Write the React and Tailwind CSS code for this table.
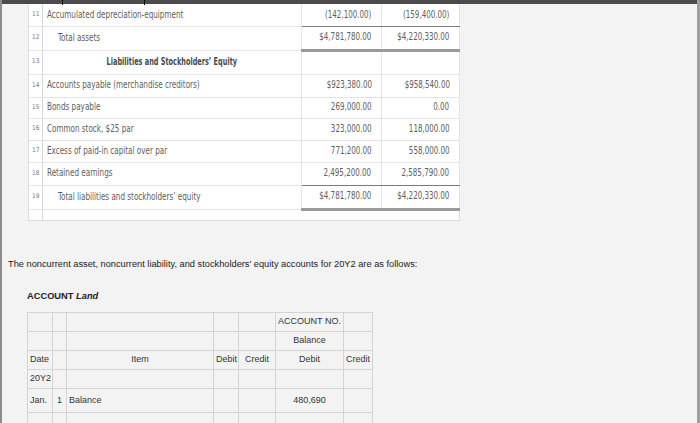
const rows = [
  { n: 11, label: "Accumulated depreciation-equipment", a: "(142,100.00)", b: "(159,400.00)", line: "single" },
  { n: 12, label: "Total assets", indent: true, a: "$4,781,780.00", b: "$4,220,330.00", line: "double" },
  { n: 13, label: "Liabilities and Stockholders’ Equity", head: true, a: "", b: "" },
  { n: 14, label: "Accounts payable (merchandise creditors)", a: "$923,380.00", b: "$958,540.00" },
  { n: 15, label: "Bonds payable", a: "269,000.00", b: "0.00" },
  { n: 16, label: "Common stock, $25 par", a: "323,000.00", b: "118,000.00" },
  { n: 17, label: "Excess of paid-in capital over par", a: "771,200.00", b: "558,000.00" },
  { n: 18, label: "Retained earnings", a: "2,495,200.00", b: "2,585,790.00", line: "single" },
  { n: 19, label: "Total liabilities and stockholders’ equity", indent: true, a: "$4,781,780.00", b: "$4,220,330.00", line: "double" },
];

const heights = ["h-[22px]", "h-[24px]", "h-[24px]", "h-[23px]", "h-[21px]", "h-[22px]", "h-[22px]", "h-[23px]", "h-[24px]"];

function AmountCell({ value, line }) {
  const bottom =
    line === "single"
      ? "border-b border-b-[#7a7a7a]"
      : line === "double"
      ? "border-b-[3px] border-b-[#9a9a9a]"
      : "border-b border-b-[#e4e4e4]";
  return (
    <td className={`border-r border-r-[#e4e4e4] ${bottom} pr-[9px] align-middle whitespace-nowrap`}>
      <div className="flex justify-end">
        <span className="inline-block origin-right scale-x-[0.72]">{value}</span>
      </div>
    </td>
  );
}

function Statement() {
  return (
    <div className="ml-[26px] w-[432px] bg-white border border-[#dcdcdc] border-t-0">
      <table className="w-[430px] table-fixed border-collapse text-[11px] text-[#606060] font-['DejaVu_Sans_Condensed','DejaVu_Sans',sans-serif]">
        <colgroup>
          <col className="w-[13px]" />
          <col className="w-[259px]" />
          <col className="w-[80px]" />
          <col className="w-[78px]" />
        </colgroup>
        <tbody>
          {rows.map((r, i) => (
            <tr key={r.n} className={heights[i]}>
              <td className="border-r border-r-[#d6d6d6] border-b border-b-[#e4e4e4] pl-[3px] text-[6.5px] text-[#777] align-middle">
                {r.n}
              </td>
              <td
                className={`border-r border-r-[#e4e4e4] border-b border-b-[#e4e4e4] align-middle whitespace-nowrap ${
                  r.head ? "text-center font-bold text-[#4a4a4a]" : r.indent ? "pl-[15px]" : "pl-[4px]"
                }`}
              >
                <span
                  className={`inline-block ${r.head ? "origin-center scale-x-[0.66]" : "origin-left scale-x-[0.73]"}`}
                >
                  {r.label}
                </span>
              </td>
              <AmountCell value={r.a} line={r.line} />
              <AmountCell value={r.b} line={r.line} />
            </tr>
          ))}
          <tr className="h-[11px]">
            <td className="border-r border-r-[#d6d6d6]"></td>
            <td></td>
            <td></td>
            <td></td>
          </tr>
        </tbody>
      </table>
    </div>
  );
}

function Ledger() {
  const cell = "border border-[#d4d4d4] px-[2px] align-middle whitespace-nowrap";
  const blank = (
    <>
      <td className={cell}></td>
      <td className={cell}></td>
      <td className={cell}></td>
      <td className={cell}></td>
      <td className={cell}></td>
    </>
  );
  return (
    <table className="ml-[25px] mt-[8px] w-[345px] table-fixed border-collapse text-[9px] text-[#333] font-['Liberation_Sans',Arial,sans-serif]">
      <colgroup>
        <col className="w-[25px]" />
        <col className="w-[14px]" />
        <col className="w-[147px]" />
        <col className="w-[25px]" />
        <col className="w-[37px]" />
        <col className="w-[68px]" />
        <col className="w-[29px]" />
      </colgroup>
      <tbody>
        <tr className="h-[19px]">
          {blank}
          <td className={`${cell} text-center`}>ACCOUNT NO.</td>
          <td className={cell}></td>
        </tr>
        <tr className="h-[19px]">
          {blank}
          <td className={`${cell} text-center`}>Balance</td>
          <td className={cell}></td>
        </tr>
        <tr className="h-[19px]">
          <td className={cell}>Date</td>
          <td className={cell}></td>
          <td className={`${cell} text-center`}>Item</td>
          <td className={`${cell} text-center`}>Debit</td>
          <td className={`${cell} text-center`}>Credit</td>
          <td className={`${cell} text-center`}>Debit</td>
          <td className={`${cell} text-center`}>Credit</td>
        </tr>
        <tr className="h-[19px]">
          <td className={cell}>20Y2</td>
          <td className={cell}></td>
          <td className={cell}></td>
          <td className={cell}></td>
          <td className={cell}></td>
          <td className={cell}></td>
          <td className={cell}></td>
        </tr>
        <tr className="h-[24px]">
          <td className={cell}>Jan.</td>
          <td className={`${cell} text-center`}>1</td>
          <td className={cell}>Balance</td>
          <td className={cell}></td>
          <td className={cell}></td>
          <td className={`${cell} text-center`}>480,690</td>
          <td className={cell}></td>
        </tr>
        <tr className="h-[19px]">
          <td className={cell}></td>
          <td className={cell}></td>
          <td className={cell}></td>
          <td className={cell}></td>
          <td className={cell}></td>
          <td className={cell}></td>
          <td className={cell}></td>
        </tr>
      </tbody>
    </table>
  );
}

export default function App() {
  return (
    <div className="relative w-[700px] h-[423px] overflow-hidden bg-[#f3f3f3] border-l-2 border-l-[#8c8c8c] border-r-[3px] border-r-[#a0a0a0]">
      <div className="relative h-[4px] bg-[#4b4b4b]">
        <span className="absolute left-[60px] top-0 h-[5px] w-px bg-black" />
        <span className="absolute left-[142px] top-0 h-[5px] w-px bg-black" />
      </div>
      <Statement />
      <p className="mt-[37px] ml-[6px] text-[9.25px] text-[#222] font-['Liberation_Sans',Arial,sans-serif]">
        The noncurrent asset, noncurrent liability, and stockholders' equity accounts for 20Y2 are as follows:
      </p>
      <p className="mt-[18px] ml-[25px] text-[9.3px] font-bold text-[#222] font-['Liberation_Sans',Arial,sans-serif]">
        ACCOUNT <span className="italic">Land</span>
      </p>
      <Ledger />
    </div>
  );
}
